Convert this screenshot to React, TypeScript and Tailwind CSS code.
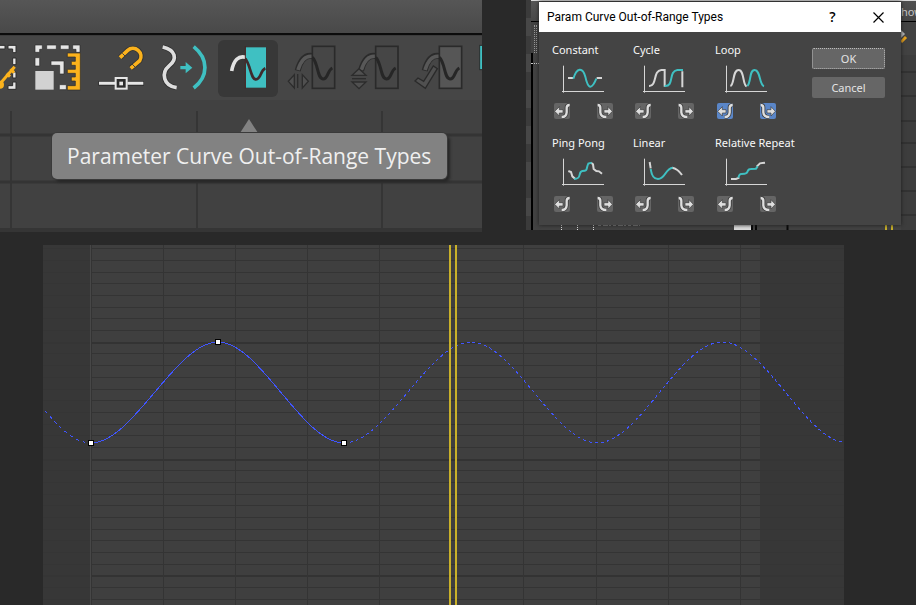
import type { ReactNode } from "react";

const TEAL = "#3fc0c2";
const GOLD = "#fbb21c";

/* ---------- Toolbar ---------- */

type ToolProps = { label: string; viewBox: string; active?: boolean; disabled?: boolean; children: ReactNode };

function Tool({ label, viewBox, active, disabled, children }: ToolProps) {
  return (
    <button
      type="button"
      aria-label={label}
      aria-pressed={active}
      disabled={disabled}
      className={`h-[57px] w-[60px] shrink-0 rounded-md ${active ? "bg-[#383838]" : ""}`}
    >
      <svg viewBox={viewBox} className="block h-[57px] w-[60px]" fill="none">
        {children}
      </svg>
    </button>
  );
}

function GhostCurve({ x, fill }: { x: number; fill: string }) {
  return (
    <g transform={`translate(${x} 0)`}>
      <path d="M-42 212C-34 182 -20 164 2 168" stroke="#2b2b2b" strokeWidth="18" />
      <path d="M-41 210C-33 184 -20 166 2 169" stroke="#585858" strokeWidth="11" />
      <rect x="2" y="139" width="67" height="126" fill={fill} stroke="#2a2a2a" strokeWidth="5" />
      <path d="M2 172C20 188 16 236 34 237C50 237 46 212 62 204" stroke="#262626" strokeWidth="9" />
    </g>
  );
}

function Toolbar() {
  return (
    <div className="-ml-[34px] flex gap-[3px] bg-[#464646] pt-1 pb-[3px]">
      <Tool label="Set key region" viewBox="-102 120 180 171">
        <g stroke="#2c2c2c" strokeWidth="3" fill="#e6e6e6">
          <path d="M-10 136H15V147H-10Z" />
          <path d="M24 136H48V158H38V147H24Z" />
          <path d="M38 174H48V194H38Z" />
          <path d="M38 216H48V234H38Z" />
          <path d="M48 246V268H24V257H38V246Z" />
        </g>
        <path d="M-4 256L44 200M32 206L42 218M20 220L30 230" stroke={GOLD} strokeWidth="9" />
        <circle cx="0" cy="254" r="12" fill={GOLD} />
      </Tool>
      <Tool label="Scale keys" viewBox="87 120 180 171">
        <g stroke="#2c2c2c" strokeWidth="2" fill="#e6e6e6">
          <path d="M105 135H127V148H119V157H105Z" />
          <path d="M140 135H169V148H140Z" />
          <path d="M181 135H207V148H181Z" />
          <path d="M218 135H240V157H228V148H218Z" />
          <path d="M105 173H119V198H105Z" />
          <path d="M153 183H192V222H179V196H153Z" />
          <path d="M178 254H199V269H178Z" />
        </g>
        <rect x="106" y="213" width="55" height="56" fill="#d2d2d2" />
        <path
          d="M202 159H241V270H202V257H226V243H214V231H226V220H202V208H226V196H214V184H226V171H202Z"
          fill={GOLD}
          stroke="#2c2c2c"
          strokeWidth="2"
        />
      </Tool>
      <Tool label="Snap frames" viewBox="276 120 180 171">
        <path d="M360 173L383 151A24 24 0 0 1 419 182L392 205" stroke="#333" strokeWidth="16" />
        <path d="M360 173L383 151A24 24 0 0 1 419 182L392 205" stroke={GOLD} strokeWidth="11" />
        <path d="M367 160L377 170M396 192L406 202" stroke="#444" strokeWidth="3" />
        <path d="M295 250H432" stroke="#2c2c2c" strokeWidth="14" />
        <path d="M297 250H345M382 250H430" stroke="#e6e6e6" strokeWidth="9" />
        <rect x="347" y="234" width="33" height="32" fill="#2c2c2c" stroke="#e6e6e6" strokeWidth="6" />
        <rect x="358" y="245" width="11" height="11" fill="#e6e6e6" />
      </Tool>
      <Tool label="Ease keys" viewBox="465 120 180 171">
        <path d="M488 141C528 150 532 178 508 197C482 219 490 257 530 263" stroke="#303030" strokeWidth="16" />
        <path d="M488 141C528 150 532 178 508 197C482 219 490 257 530 263" stroke="#dedede" strokeWidth="11" />
        <path d="M541 198H557V186L577 203L557 220V208H541Z" fill={TEAL} />
        <path d="M581 140C626 176 626 230 581 264" stroke={TEAL} strokeWidth="11" />
      </Tool>
      <Tool label="Parameter Curve Out-of-Range Types" active viewBox="654 120 180 171">
        <path d="M695 213C701 180 716 166 737 172" stroke="#e2e2e2" strokeWidth="11" />
        <rect x="737" y="142" width="61" height="121" fill={TEAL} />
        <path d="M736 138V266" stroke="#4a2323" strokeWidth="3" />
        <path d="M736 176C752 196 752 238 768 238C784 238 780 212 796 205" stroke="#3f2b2d" strokeWidth="8" />
      </Tool>
      <Tool label="Scale curve horizontally" disabled viewBox="843 120 180 171">
        <GhostCurve x={935} fill="#464646" />
        <g fill="#505050" stroke="#2c2c2c" strokeWidth="4">
          <path d="M883 224V264L865 244Z" />
          <path d="M907 224V264L925 244Z" />
          <path d="M893 222V264" />
        </g>
      </Tool>
      <Tool label="Scale curve vertically" disabled viewBox="1032 120 180 171">
        <GhostCurve x={1125} fill="#464646" />
        <g fill="#505050" stroke="#2c2c2c" strokeWidth="4">
          <path d="M1056 226H1098L1077 206Z" />
          <path d="M1056 246H1098L1077 266Z" />
          <path d="M1056 236H1098" />
        </g>
      </Tool>
      <Tool label="Apply curve" disabled viewBox="1221 120 180 171">
        <GhostCurve x={1316} fill="#565656" />
        <path
          d="M1245 243L1254 234L1271 244L1300 198L1312 206L1276 265Z"
          fill="#505050"
          stroke="#2a2a2a"
          strokeWidth="4"
        />
      </Tool>
      <Tool label="More tools" viewBox="1410 120 180 171">
        <rect x="1439" y="136" width="60" height="73" fill={TEAL} stroke="#2c2c2c" strokeWidth="3" />
      </Tool>
    </div>
  );
}

function ToolbarPanel() {
  return (
    <section className="flex flex-col overflow-hidden bg-[#414141]">
      <div className="h-[33px] bg-linear-to-b from-[#565656] to-[#494949]" />
      <div className="h-[2px] bg-[#0c0c0c]" />
      <div className="h-px bg-[#3c3c3c]" />
      <Toolbar />
      <div className="relative h-[132px] bg-[#414141]">
        <svg
          className="absolute inset-0 h-full w-full"
          viewBox="0 0 482 132"
          preserveAspectRatio="none"
          aria-hidden="true"
        >
          <path d="M11 11V128M197 11V128M382 11V128" stroke="#353535" strokeWidth="2" />
          <path d="M0 35H482M0 82H482" stroke="#343434" strokeWidth="3" />
          <rect y="128" width="482" height="4" fill="#353535" />
        </svg>
        <div className="relative flex flex-col pt-[19px] pr-[35px] pl-[52px]">
          <svg className="ml-[188px] block h-[14px] w-[18px]" viewBox="0 0 18 14" aria-hidden="true">
            <path d="M0 14L9 0L18 14Z" fill="#828282" />
          </svg>
          <div
            role="tooltip"
            className="h-[46px] rounded-[5px] bg-[#828282] pl-[15px] font-['Open_Sans',sans-serif] text-[21px] leading-[46px] whitespace-nowrap text-[#f0f0f0] shadow-[3px_3px_3px_#262626] ring-1 ring-[#3a3a3a]"
          >
            Parameter Curve Out-of-Range Types
          </div>
        </div>
      </div>
    </section>
  );
}

/* ---------- Dialog ---------- */

const CURVES: { name: string; selected?: boolean; base: string; accent: string }[] = [
  {
    name: "Constant",
    base: "M21 42H36M107 42H123",
    accent: "M37 44C47 10 65 8 73 38C81 76 92 78 106 44",
  },
  {
    name: "Cycle",
    base: "M21 66C46 67 32 20 58 18L68 18V68M121 22V70",
    accent: "M68 66C98 68 78 22 106 18H123",
  },
  {
    name: "Loop",
    selected: true,
    base: "M19 66C32 62 25 18 44 18C61 18 56 64 68 67",
    accent: "M70 66C82 55 75 18 92 18C110 18 105 62 120 67",
  },
  {
    name: "Ping Pong",
    base: "M22 42L30 45L34 58L43 66M90 17L96 22L98 36L106 42L114 43L123 50",
    accent: "M40 66C64 66 50 44 64 42C82 42 74 36 82 20L92 17",
  },
  {
    name: "Linear",
    base: "M23 15L26 34M90 32C104 34 112 42 120 54",
    accent: "M26 36C30 62 38 66 48 66C70 66 70 34 92 32",
  },
  {
    name: "Relative Repeat",
    base: "M21 66H36L46 62M98 29L108 19L123 17",
    accent: "M43 62C46 50 50 50 62 50C76 50 66 36 80 36L96 35L101 28",
  },
];

function SideToggle({ name, side, on }: { name: string; side: "before" | "after"; on?: boolean }) {
  return (
    <button
      type="button"
      aria-label={`${name} ${side}`}
      aria-pressed={!!on}
      className={`size-4 rounded-[2px] ${on ? "bg-[#5a86c8]" : "bg-[#656565]"}`}
    >
      <svg viewBox="0 0 48 48" className="block size-4" fill="none">
        {side === "before" ? (
          <>
            <path d="M47 6Q38 6 38 14V28Q37 42 23 42" stroke="#3c3c3c" strokeWidth="12" />
            <path d="M2 25L16 11V20H27V30H16V39Z" fill="#dedede" stroke="#3c3c3c" strokeWidth="2" />
            <path d="M47 6Q38 6 38 14V28Q37 42 23 42" stroke="#dedede" strokeWidth="7" />
          </>
        ) : (
          <>
            <path d="M2 6Q10 6 10 14V28Q11 42 28 42" stroke="#3c3c3c" strokeWidth="12" />
            <path d="M46 25L33 11V20H21V30H33V39Z" fill="#dedede" stroke="#3c3c3c" strokeWidth="2" />
            <path d="M2 6Q10 6 10 14V28Q11 42 28 42" stroke="#dedede" strokeWidth="7" />
          </>
        )}
      </svg>
    </button>
  );
}

function Dialog() {
  return (
    <div
      role="dialog"
      aria-label="Param Curve Out-of-Range Types"
      className="relative flex flex-1 flex-col bg-[#444444] shadow-[0_0_4px_#1c1c1c]"
    >
      <header className="flex h-[30px] items-center bg-white pl-2 text-black">
        <h1 className="flex-1 font-['Roboto',sans-serif] text-[12px] leading-4 whitespace-nowrap">
          Param Curve Out-of-Range Types
        </h1>
        <button
          type="button"
          aria-label="Help"
          className="w-[45px] font-['Open_Sans',sans-serif] text-[14px] leading-5 font-semibold"
        >
          ?
        </button>
        <button type="button" aria-label="Close" className="flex h-[30px] w-[46px] items-center justify-center">
          <svg viewBox="0 0 11 11" className="size-[11px]" stroke="#000" strokeWidth="1.2">
            <path d="M0.5 0.5L10.5 10.5M10.5 0.5L0.5 10.5" />
          </svg>
        </button>
      </header>
      <div className="flex flex-1 justify-between pr-4 pl-[13px] font-['Noto_Sans',sans-serif]">
        <div className="grid grid-cols-[81px_82px_82px] gap-y-4 pt-[10px] pb-[13px]">
          {CURVES.map((c) => (
            <fieldset key={c.name} className="flex h-[77px] flex-col">
              <legend className="h-4 text-[11px] leading-4 whitespace-nowrap text-[#f8f8f8]">{c.name}</legend>
              <svg viewBox="0 0 135 87" className="mt-[6px] ml-[9px] h-[29px] w-[45px]" fill="none" aria-hidden="true">
                <path d="M7.500 5V86M3 82.500H129" stroke="#d6d6d6" strokeWidth="3" />
                <path d={c.base} stroke="#d6d6d6" strokeWidth="6" />
                <path d={c.accent} stroke={TEAL} strokeWidth="6" />
              </svg>
              <div className="mt-[10px] ml-[2px] flex gap-[27px]">
                <SideToggle name={c.name} side="before" on={c.selected} />
                <SideToggle name={c.name} side="after" on={c.selected} />
              </div>
            </fieldset>
          ))}
        </div>
        <div className="flex w-[73px] flex-col gap-2 pt-4 text-[11px] leading-4 text-[#e4e4e4]">
          <button type="button" className="h-[21px] rounded-[2px] border border-dotted border-[#bdbdbd] bg-[#666666]">
            OK
          </button>
          <button type="button" className="h-[21px] rounded-[2px] bg-[#666666]">
            Cancel
          </button>
        </div>
      </div>
    </div>
  );
}

function Backdrop() {
  const bands = Array.from({ length: 13 }, (_, i) => i);
  return (
    <div aria-hidden="true" className="absolute inset-0 flex overflow-hidden bg-[#424242]">
      <div className="w-[5px] shrink-0">
        {bands.map((i) => (
          <div key={i} className={`h-[18px] ${i % 2 ? "bg-[#474747]" : "bg-[#3b3b3b]"}`} />
        ))}
      </div>
      <div className="flex w-2 shrink-0 flex-col">
        <div className="h-px bg-[#d9d9d9]" />
        <div className="h-5 bg-linear-to-b from-[#565656] to-[#484848]" />
        <div className="h-px bg-black" />
        <div className="h-[3px]" />
        <div className="ml-[3px] h-7 w-[3px] border-x border-dotted border-[#999]" />
        <div className="h-[10px] border-l-2 border-black" />
        <div className="h-px border-t border-dotted border-[#ccc]" />
        <div className="flex-1 border-l-2 border-black" />
      </div>
      <div className="flex flex-1 flex-col justify-between">
        <div className="h-px bg-[#d9d9d9]" />
        <svg className="h-[5px] w-[362px]" viewBox="0 0 362 5">
          <path d="M22.500 0V5M38.500 0V5M54.500 0V5" stroke="#e0e0e0" strokeDasharray="1 1" />
          <path d="M59 0.500H101" stroke="#858585" strokeDasharray="3 2 5 1 2 2" />
          <path d="M195 0H212V5H195Z" fill="#dcdcdc" />
          <path d="M213 0V5M217 0V5M248.500 0V5" stroke="#080808" strokeWidth="2" />
          <path d="M347 0V5M353 0V5" stroke="#c9b12a" strokeWidth="2" />
        </svg>
      </div>
      <div className="flex w-[15px] shrink-0 flex-col">
        <div className="h-px bg-[#d9d9d9]" />
        <div className="h-5 bg-linear-to-b from-[#505050] to-[#464646] font-['Noto_Sans',sans-serif] text-[11px] leading-[22px] text-[#c4c4c4]">
          how
        </div>
        <div className="h-px bg-black" />
        <svg className="h-[208px] w-[15px]" viewBox="0 0 15 208">
          <path d="M0 8L4 12L0 16Z" fill="#b8b8b8" />
          <path d="M0 20L5 15" stroke="#e8a21c" strokeWidth="3" />
          <path d="M0 33H15V208H0Z" fill="#3d3d3d" />
          <path
            d="M0 50H15M0 74H15M0 99H15M0 121H15M0 145H15M0 169H15M0 193H15"
            stroke="#323232"
            strokeWidth="2"
          />
        </svg>
      </div>
    </div>
  );
}

/* ---------- Curve graph ---------- */

const MINOR_ROWS = [
  3, 15, 27, 38, 50, 62, 73, 85, 108, 120, 132, 144, 155, 167, 179, 190, 202, 225, 237, 249, 260, 272, 284, 295, 307,
  319, 342, 354,
];
const MAJOR_ROWS = [97, 214, 330];
const COLUMNS = [48, 120, 192, 264, 336, 480, 553, 625, 697];
const KEYS = [
  [48, 198],
  [175, 97],
  [301, 198],
];

function CurveGraph() {
  return (
    <svg
      viewBox="0 0 801 360"
      className="block w-full bg-[#3f3f3f]"
      role="img"
      aria-label="Looped parameter curve"
      fill="none"
      shapeRendering="crispEdges"
    >
      {MINOR_ROWS.map((y) => (
        <rect key={y} x="0" y={y} width="801" height="1" fill="#343434" />
      ))}
      {MAJOR_ROWS.map((y) => (
        <rect key={y} x="0" y={y} width="801" height="2" fill="#333333" />
      ))}
      {COLUMNS.map((x) => (
        <rect key={x} x={x} y="0" width="1" height="360" fill="#343434" />
      ))}
      <rect x="0" y="0" width="47" height="360" fill="#363636" fillOpacity="0.8" />
      <rect x="47" y="0" width="1" height="360" fill="#474747" />
      <rect x="717" y="0" width="84" height="360" fill="#363636" fillOpacity="0.8" />
      <path d="M48 198C90 198 133 97 175 97C217 97 259 198 301 198" stroke="#4055ff" />
      <path d="M2 166C18 184 32 198 48 198" stroke="#4055ff" strokeDasharray="3 4" />
      <path
        d="M301 198C343 198 386 97 428 97C470 97 512 198 554 198C596 198 637 97 679 97C721 97 760 190 799 197"
        stroke="#4055ff"
        strokeDasharray="3 3"
      />
      <rect x="406" y="0" width="2" height="360" fill="#c9b12a" />
      <rect x="412" y="0" width="2" height="360" fill="#c9b12a" />
      {KEYS.map(([x, y]) => (
        <g key={x}>
          <rect x={x - 3} y={y - 3} width="6" height="6" fill="#000" />
          <rect x={x - 2} y={y - 2} width="4" height="4" fill="#fff" />
        </g>
      ))}
    </svg>
  );
}

export default function App() {
  return (
    <main className="flex min-h-screen flex-col gap-[13px] overflow-hidden bg-[#292929]">
      <div className="grid grid-cols-[482fr_390fr] items-start gap-x-11">
        <ToolbarPanel />
        <section className="relative flex pt-[2px] pr-[15px] pb-[5px] pl-[13px]">
          <Backdrop />
          <Dialog />
        </section>
      </div>
      <div className="pr-[72px] pl-[43px]">
        <CurveGraph />
      </div>
    </main>
  );
}
